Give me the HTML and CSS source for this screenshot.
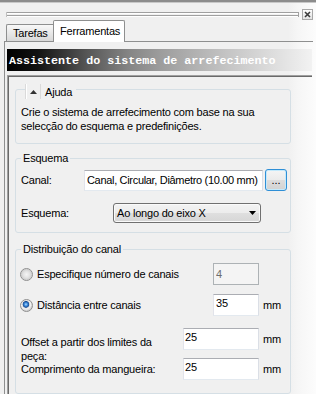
FILE: index.html
```html
<!DOCTYPE html>
<html lang="pt">
<head>
<meta charset="utf-8">
<title>Assistente do sistema de arrefecimento</title>
<link rel="stylesheet" href="styles.css">
</head>
<body>
<div class="topline"></div>
<div class="griprow">
  <div class="grip"></div>
  <div class="close"><svg width="7" height="7" viewBox="0 0 7 7"><path d="M1 1L6 6M6 1L1 6" stroke="#3a3a3a" stroke-width="1.6" fill="none"/></svg></div>
</div>
<div class="tabs">
  <div class="tab">Tarefas</div>
  <div class="tab tab-active">Ferramentas</div>
</div>
<div class="tabpage">
  <div class="titlebar">Assistente do sistema de arrefecimento</div>
  <div class="panel">
    <fieldset class="group group-help">
      <legend class="legend legend-help"><span class="toggle"><svg width="7" height="4" viewBox="0 0 7 4"><path d="M3.5 0L7 4H0Z" fill="#333"/></svg></span><span class="legend-text">Ajuda</span></legend>
      <p class="help-text">Crie o sistema de arrefecimento com base na sua selecção do esquema e predefinições.</p>
    </fieldset>

    <fieldset class="group group-scheme">
      <legend class="legend">Esquema</legend>
      <div class="row row-canal">
        <span class="lbl-canal">Canal:</span>
        <input class="field field-canal" type="text" readonly value="Canal, Circular, Diâmetro (10.00 mm)">
        <button class="btn-more" type="button">...</button>
      </div>
      <div class="row row-scheme">
        <span class="lbl-scheme">Esquema:</span>
        <div class="select"><span>Ao longo do eixo X</span><svg width="7" height="4" viewBox="0 0 7 4"><path d="M0 0H7L3.5 4Z" fill="#000"/></svg></div>
      </div>
    </fieldset>

    <fieldset class="group group-dist">
      <legend class="legend">Distribuição do canal</legend>
      <div class="row row-radio">
        <span class="radio"></span>
        <span class="radio-label">Especifique número de canais</span>
        <input class="field field-num field-disabled" type="text" disabled value="4">
        <span class="unit"></span>
      </div>
      <div class="row row-radio">
        <span class="radio radio-on"></span>
        <span class="radio-label">Distância entre canais</span>
        <input class="field field-num" type="text" value="35">
        <span class="unit">mm</span>
      </div>
      <div class="row row-offset">
        <span class="lbl-offset">Offset a partir dos limites da peça:</span>
        <input class="field field-wide" type="text" value="25">
        <span class="unit">mm</span>
      </div>
      <div class="row row-hose">
        <span class="lbl-hose">Comprimento da mangueira:</span>
        <input class="field field-wide" type="text" value="25">
        <span class="unit">mm</span>
      </div>
    </fieldset>
  </div>
</div>
</body>
</html>
```
FILE: styles.css
```css
* { box-sizing: border-box; }
html, body { margin: 0; padding: 0; }
body {
  width: 316px;
  height: 394px;
  overflow: hidden;
  font-family: "Liberation Sans", Arial, sans-serif;
  font-size: 11px;
  letter-spacing: -0.2px;
  color: #000;
  background: linear-gradient(to right, #f0f0f0 0, #f0f0f0 288px, #f6f6f6 298px, #fcfcfc 316px);
}

.topline {
  height: 3px;
  background: linear-gradient(to bottom, #8c8c8c 0, #8c8c8c 2px, #c8c8c8 2px);
}

.griprow {
  display: flex;
  height: 17px;
  padding: 6px 3px 0 6px;
}
.grip {
  flex: 1;
  height: 5px;
  margin-top: 3px;
  border-right: 1px solid #a0a0a0;
  border-left: 1px solid #c0c0c0;
  background: linear-gradient(to bottom, #a0a0a0 0, #a0a0a0 1px, #fff 1px, #fff 2px, transparent 2px, transparent 3px, #a0a0a0 3px, #a0a0a0 4px, #fff 4px);
}
.close {
  width: 11px;
  height: 11px;
  margin-left: 3px;
  border: 1px solid #a8a8a8;
  background: linear-gradient(#fdfdfd, #e2e2e2);
  display: flex;
  align-items: center;
  justify-content: center;
}

.tabs {
  display: flex;
  align-items: flex-end;
  height: 21px;
  padding-left: 6px;
}
.tab {
  width: 47px;
  height: 17px;
  line-height: 16px;
  padding: 0 6px;
  border: 1px solid #8e8f8f;
  border-bottom: none;
  border-right: none;
  border-radius: 2px 0 0 0;
  background: linear-gradient(#f8f8f8, #e8e8e8 50%, #d8d8d8);
  white-space: nowrap;
}
.tab-active {
  width: 72px;
  height: 22px;
  margin-bottom: -1px;
  padding-top: 3px;
  line-height: 14px;
  background: #fff;
  border-right: 1px solid #8e8f8f;
  border-radius: 2px 2px 0 0;
  position: relative;
  z-index: 1;
}

.tabpage {
  margin-left: 4px;
  width: 309px;
  height: 353px;
  border-top: 1px solid #8e8f8f;
  border-left: 1px solid #8e8f8f;
  padding: 7px 0 0 2px;
}

.titlebar {
  width: 305px;
  height: 22px;
  padding: 3px 0 0 2px;
  line-height: 19px;
  font-family: "Liberation Mono", "Courier New", monospace;
  font-weight: bold;
  font-size: 11.7px;
  letter-spacing: 0;
  color: #fff;
  white-space: nowrap;
  background: linear-gradient(to right, #000 0%, #121212 10%, #555 26%, #858585 40%, #9c9c9c 50%, #c4c4c4 72%, #f2f2f2 100%);
}

.panel {
  margin-top: 4px;
  width: 305px;
  height: 319px;
  border-top: 1px solid #a0a0a0;
  border-left: 1px solid #a0a0a0;
  box-shadow: inset 1px 1px 0 #6a6a6a;
  padding: 4px 0 0 7px;
}

.group {
  width: 276px;
  min-width: 0;
  margin: 0;
  border: 1px solid #d5dfe5;
  border-radius: 3px;
  padding: 0 3px 0 5px;
}
.group-help { padding-top: 6px; padding-bottom: 10px; }
.group-scheme { margin-top: 7px; padding-top: 4px; padding-bottom: 9px; }
.group-dist { margin-top: 9px; padding-top: 7px; padding-bottom: 13px; }

.legend {
  padding: 0 2px;
  line-height: 14px;
}
.legend-help {
  display: flex;
  align-items: center;
  padding: 4px 4px 0 0;
  margin-left: 4px;
}
.toggle {
  width: 16px;
  height: 15px;
  display: flex;
  align-items: center;
  justify-content: center;
  border-left: 1px solid #dadada;
  border-right: 1px solid #dadada;
  box-shadow: inset 1px 0 0 #fff;
}
.legend-text { margin-left: 4px; }

.help-text {
  margin: 0;
  line-height: 14px;
}

.row {
  display: flex;
  align-items: center;
}
.row-canal { height: 22px; }
.lbl-canal { width: 63px; flex: none; }
.lbl-scheme { width: 92px; flex: none; }

.field {
  height: 21px;
  margin: 0;
  padding: 0 2px;
  border: 1px solid;
  border-color: #abadb3 #dbdfe6 #e3e9ef #e2e3ea;
  background: #fff;
  font: inherit;
  letter-spacing: inherit;
  color: #000;
  outline: none;
  flex: none;
}
.field-canal {
  width: 179px;
  padding: 0 0 0 2px;
  letter-spacing: -0.32px;
}
.field-num, .field-wide {
  height: 22px;
  padding: 1px 2px 5px;
}
.field-num { width: 46px; }
.field-wide { width: 76px; padding-left: 1px; }
.field-disabled {
  background: #f4f4f4;
  border-color: #adb2b5;
  color: #6d6d6d;
  padding-top: 3px;
  padding-bottom: 3px;
}

.btn-more {
  width: 22px;
  height: 22px;
  margin: 0 0 0 2px;
  padding: 0 0 1px;
  border: 1px solid #2f8fd6;
  border-radius: 3px;
  background: linear-gradient(#f5f5f5, #ebebeb 50%, #dddddd 50%, #d2d2d2);
  box-shadow: inset 0 0 0 1px #c4eafc;
  font: inherit;
  letter-spacing: 0;
  color: #000;
  flex: none;
}

.row-scheme { height: 20px; margin-top: 12px; }
.select {
  width: 148px;
  height: 20px;
  display: flex;
  align-items: center;
  justify-content: space-between;
  padding: 0 4px 0 3px;
  border: 1px solid #707070;
  border-radius: 3px;
  background: linear-gradient(#f3f3f3, #ececec 50%, #dfdfdf 50%, #d6d6d6);
  box-shadow: inset 0 0 0 1px #fafafa;
}

.row-radio { height: 22px; }
.row-radio + .row-radio { margin-top: 9px; }
.radio {
  width: 13px;
  height: 13px;
  flex: none;
  margin-left: -1px;
  margin-right: 4px;
  border-radius: 50%;
  border: 1px solid #8f8f8f;
  background: radial-gradient(circle at 50% 50%, #f4f4f4 0, #e4e4e4 3px, #d2d2d2 5px, #ececec 6px);
}
.radio-on {
  background: radial-gradient(circle at 45% 40%, #b4deff 0, #3f8fe0 1.5px, #1a4d94 3px, #dcdcdc 3.6px, #f2f2f2 4.6px, #d4d4d4 6px);
}
.radio-label { flex: 1; }
.unit { width: 28px; padding-left: 4px; flex: none; }

.row-offset {
  height: 30px;
  margin-top: 12px;
  align-items: flex-start;
}
.lbl-offset {
  flex: 1;
  padding: 7px 20px 0 0;
  line-height: 14px;
}
.row-offset .unit { line-height: 22px; }
.row-hose { height: 22px; }
.lbl-hose { flex: 1; }
```
